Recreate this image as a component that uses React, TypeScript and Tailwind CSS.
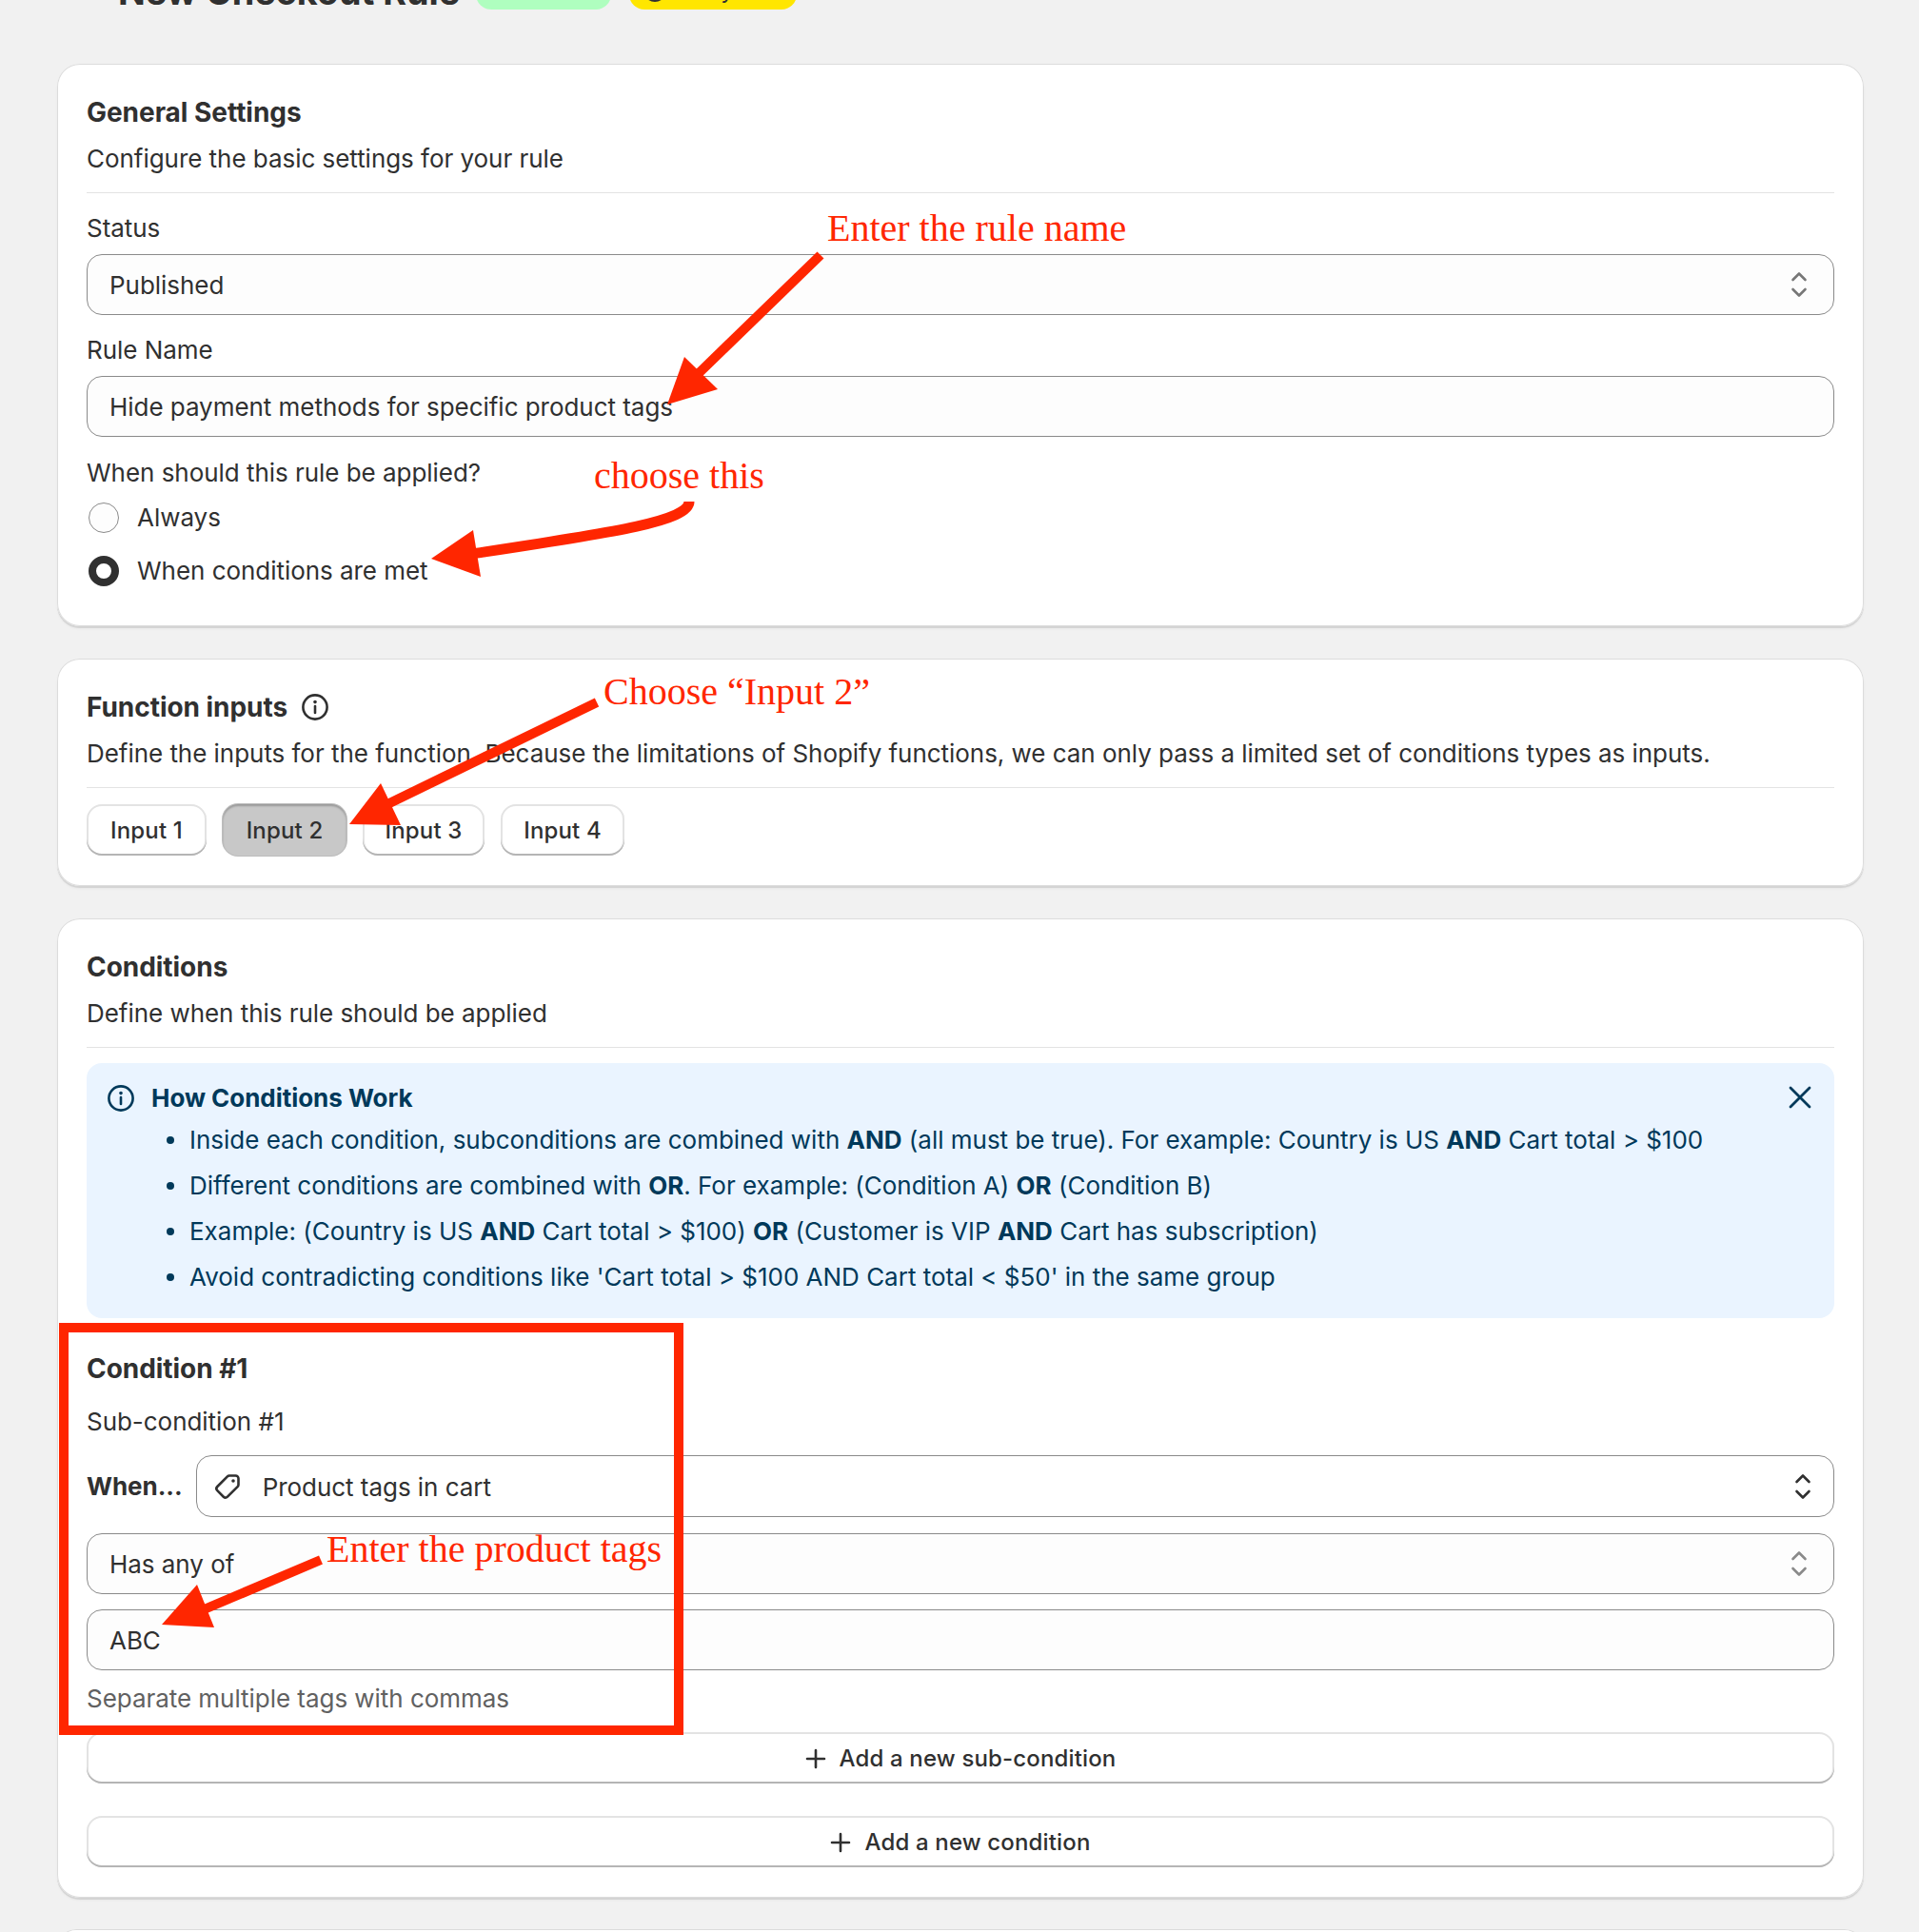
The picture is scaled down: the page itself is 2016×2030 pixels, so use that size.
import React from "react";

const font = { fontFamily: "Inter, 'Liberation Sans', sans-serif" };

function Chevrons({ className }: { className: string }) {
  return (
    <svg width="24" height="32" viewBox="0 0 24 32" fill="none" className={className}>
      <path d="M5.5 11 12 4.5 18.5 11M5.5 21 12 27.5 18.5 21" stroke="currentColor" strokeWidth="2.6" strokeLinecap="round" strokeLinejoin="round" />
    </svg>
  );
}

function InfoIcon({ className }: { className: string }) {
  return (
    <svg width="30" height="30" viewBox="0 0 30 30" fill="none" className={className}>
      <circle cx="15" cy="15" r="12.6" stroke="currentColor" strokeWidth="2.6" />
      <path d="M15 14v7" stroke="currentColor" strokeWidth="2.6" strokeLinecap="round" />
      <circle cx="15" cy="9.6" r="1.8" fill="currentColor" />
    </svg>
  );
}

function Plus() {
  return (
    <svg width="22" height="22" viewBox="0 0 22 22" fill="none" className="text-[#303030]">
      <path d="M11 2v18M2 11h18" stroke="currentColor" strokeWidth="2.6" strokeLinecap="round" />
    </svg>
  );
}

function Card({ className, children }: { className: string; children: React.ReactNode }) {
  return (
    <section className={`rounded-[24px] bg-white px-[31px] shadow-[0_2px_0_0_#d4d4d4,inset_0_0_0_1px_#dcdcdc,0_3px_2px_0_#e8e8e8] ${className}`}>
      {children}
    </section>
  );
}

function Box({ children, right }: { children: React.ReactNode; right?: React.ReactNode }) {
  return (
    <div className="flex h-[64px] items-center justify-between rounded-[16px] border border-[#8a8a8a] bg-[#fdfdfd] pl-[23px] pr-[24px]">
      <span className="pt-[1px]">{children}</span>
      {right}
    </div>
  );
}

function Btn({ children, active, className }: { children: React.ReactNode; active?: boolean; className?: string }) {
  return (
    <button
      className={`h-[54px] rounded-[16px] pt-[1px] text-[24px] font-[550] leading-[40px] tracking-[0.15px] ${
        active
          ? "bg-[#c8c8c8] shadow-[inset_0_2px_2px_0_#9a9a9a,0_0_0_1px_#bdbdbd]"
          : "bg-white shadow-[inset_0_-2px_0_0_#b5b5b5,inset_0_0_0_2px_#e3e3e3]"
      } ${className ?? ""}`}
    >
      {children}
    </button>
  );
}

function Li({ children }: { children: React.ReactNode }) {
  return (
    <li className="flex h-[48px] items-center tracking-[-0.01px]">
      <span className="mr-[16px] h-[8px] w-[8px] rounded-full bg-[#00395a]" />
      <span>{children}</span>
    </li>
  );
}

function Red({ x, y, children }: { x: string; y: string; children: string }) {
  return (
    <span className={`absolute whitespace-nowrap text-[40px] leading-[46px] tracking-normal text-[#ff2600] ${x} ${y}`} style={{ fontFamily: "'Liberation Serif', serif" }}>
      {children}
    </span>
  );
}

export default function App() {
  return (
    <div className="relative h-[2030px] overflow-hidden bg-[#f1f1f1] pl-[60px] pr-[58px] text-[26px] leading-[40px] tracking-[-0.04px] text-[#303030]" style={font}>
      <header className="-mt-[30px] flex h-[40px] items-center pl-[64px]">
        <h1 className="pt-[1px] text-[37.8px] font-[650] leading-[48px] text-[#303030]">New Checkout Rule</h1>
        <span className="ml-[17px] h-[40px] w-[142px] rounded-[16px] bg-[#affebf] px-[16px] text-[24px]">Active</span>
        <span className="ml-[19px] flex h-[40px] w-[176px] items-center gap-[6px] rounded-[16px] bg-[#ffe600] px-[14px] text-[24px]">
          <svg width="26" height="26" viewBox="0 0 26 26" className="mt-[-1px]">
            <circle cx="13" cy="13" r="12" fill="#303030" />
          </svg>
          Delayed
        </span>
      </header>

      <Card className="mt-[57px] h-[591px] pt-[31px]">
        <h2 className="font-[650] text-[28px] leading-[40px]">General Settings</h2>
        <p className="mt-[9px]">Configure the basic settings for your rule</p>
        <div className="mt-[15px] h-[1px] bg-[#e3e3e3]" />
        <label className="mt-[17px] block">Status</label>
        <div className="mt-[7px]">
          <Box right={<Chevrons className="text-[#777]" />}>Published</Box>
        </div>
        <label className="mt-[17px] block">Rule Name</label>
        <div className="mt-[7px]">
          <Box>Hide payment methods for specific product tags</Box>
        </div>
        <p className="mt-[18px]">When should this rule be applied?</p>
        <div className="mt-[7px] flex h-[40px] items-center gap-[19px]">
          <span className="ml-[2px] h-[32px] w-[32px] rounded-full border border-[#8a8a8a] bg-[#fdfdfd]" />
          Always
        </div>
        <div className="mt-[16px] flex h-[40px] items-center gap-[19px]">
          <span className="ml-[2px] h-[32px] w-[32px] rounded-full border-[8px] border-[#303030] bg-white" />
          When conditions are met
        </div>
      </Card>

      <Card className="mt-[34px] h-[239px] pt-[31px]">
        <h2 className="flex items-center gap-[14px] font-[650] text-[28px] leading-[40px]">
          Function inputs <InfoIcon className="text-[#303030]" />
        </h2>
        <p className="mt-[9px] whitespace-nowrap">
          Define the inputs for the function. Because the limitations of Shopify functions, we can only pass a limited set of conditions types as inputs.
        </p>
        <div className="mt-[15px] h-[1px] bg-[#e3e3e3]" />
        <div className="mt-[17px] flex gap-[17px]">
          <Btn className="w-[126px]">Input 1</Btn>
          <Btn active className="w-[130px]">Input 2</Btn>
          <Btn className="w-[128px]">Input 3</Btn>
          <Btn className="w-[130px]">Input 4</Btn>
        </div>
      </Card>

      <Card className="mt-[34px] h-[1029px] pt-[31px]">
        <h2 className="font-[650] text-[28px] leading-[40px]">Conditions</h2>
        <p className="mt-[9px]">Define when this rule should be applied</p>
        <div className="mt-[15px] h-[1px] bg-[#e3e3e3]" />
        <div className="relative mt-[16px] h-[268px] rounded-[16px] bg-[#eaf4ff] pl-[21px] pr-[24px] pt-[17px] text-[#00395a]">
          <div className="flex h-[40px] items-center gap-[17px]">
            <InfoIcon className="text-[#00395a]" />
            <h3 className="font-[650]">How Conditions Work</h3>
          </div>
          <svg width="24" height="24" viewBox="0 0 24 24" fill="none" className="absolute right-[24px] top-[24px]">
            <path d="M2 2l20 20M22 2 2 22" stroke="#00395a" strokeWidth="2.8" strokeLinecap="round" />
          </svg>
          <ul className="ml-[63px]">
            <Li>Inside each condition, subconditions are combined with <b className="font-[650]">AND</b> (all must be true). For example: Country is US <b className="font-[650]">AND</b> Cart total &gt; $100</Li>
            <Li>Different conditions are combined with <b className="font-[650]">OR</b>. For example: (Condition A) <b className="font-[650]">OR</b> (Condition B)</Li>
            <Li>Example: (Country is US <b className="font-[650]">AND</b> Cart total &gt; $100) <b className="font-[650]">OR</b> (Customer is VIP <b className="font-[650]">AND</b> Cart has subscription)</Li>
            <Li>Avoid contradicting conditions like 'Cart total &gt; $100 AND Cart total &lt; $50' in the same group</Li>
          </ul>
        </div>
        <h3 className="mt-[33px] text-[28px] font-[650]">Condition #1</h3>
        <p className="mt-[16px]">Sub-condition #1</p>
        <div className="mt-[15px] flex items-center gap-[14px]">
          <b className="font-[650]">When...</b>
          <div className="flex h-[65px] flex-1 items-center justify-between rounded-[16px] border border-[#8a8a8a] bg-white pl-[17px] pr-[20px]">
            <span className="flex items-center gap-[22px]">
              <svg width="30" height="30" viewBox="0 0 30 30" fill="none">
                <path d="M17 3.5h6.5a3 3 0 0 1 3 3V13a3 3 0 0 1-.9 2.1L15 25.7a3 3 0 0 1-4.2 0l-6.5-6.5a3 3 0 0 1 0-4.2L14.9 4.4A3 3 0 0 1 17 3.5Z" stroke="#303030" strokeWidth="2.6" strokeLinejoin="round" />
                <circle cx="21" cy="9" r="1.8" fill="#303030" />
              </svg>
              <span className="pt-[2px]">Product tags in cart</span>
            </span>
            <Chevrons className="text-[#303030]" />
          </div>
        </div>
        <div className="mt-[17px]">
          <Box right={<Chevrons className="text-[#8a8a8a]" />}>Has any of</Box>
        </div>
        <div className="mt-[16px]">
          <Box>ABC</Box>
        </div>
        <p className="mt-[10px] text-[#616161]">Separate multiple tags with commas</p>
        <Btn className="mt-[15px] flex w-full items-center justify-center gap-[14px]"><Plus />Add a new sub-condition</Btn>
        <Btn className="mt-[34px] flex w-full items-center justify-center gap-[14px]"><Plus />Add a new condition</Btn>
      </Card>

      <Card className="mt-[33px] h-[40px]">{null}</Card>

      <div className="absolute left-[62px] top-[1390px] h-[433px] w-[656px] border-[10px] border-[#ff2600]" />

      <svg width="2016" height="2030" viewBox="0 0 2016 2030" fill="none" className="absolute left-0 top-0">
        <path d="M862 268 728 398" stroke="#ff2600" strokeWidth="10" />
        <polygon points="701,425 719,375 754,409" fill="#ff2600" />
        <path d="M724 527C724 548 640 560 495 582" stroke="#ff2600" strokeWidth="11" />
        <polygon points="453,587 497,557 505,606" fill="#ff2600" />
        <path d="M627 738 405 846" stroke="#ff2600" strokeWidth="10" />
        <polygon points="367,866 400,823 421,867" fill="#ff2600" />
        <path d="M337 1639 205 1695" stroke="#ff2600" strokeWidth="10" />
        <polygon points="170,1707 207,1665 225,1710" fill="#ff2600" />
      </svg>

      <Red x="left-[869px]" y="top-[217px]">Enter the rule name</Red>
      <Red x="left-[624px]" y="top-[477px]">choose this</Red>
      <Red x="left-[634px]" y="top-[704px]">Choose “Input 2”</Red>
      <Red x="left-[343px]" y="top-[1605px]">Enter the product tags</Red>
    </div>
  );
}
